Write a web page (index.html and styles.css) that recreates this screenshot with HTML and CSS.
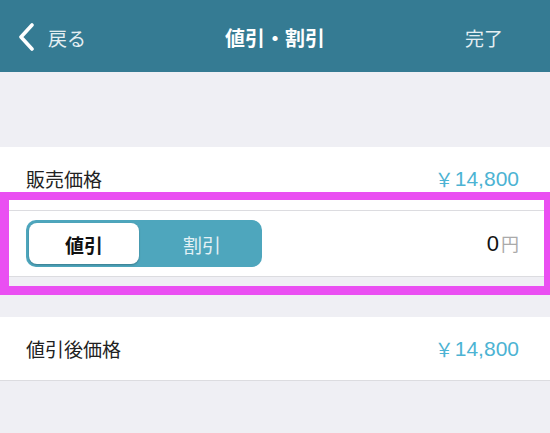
FILE: index.html
```html
<!DOCTYPE html>
<html lang="ja">
<head>
<meta charset="utf-8">
<link rel="stylesheet" href="styles.css">
</head>
<body>
<div class="screen">
  <header class="navbar">
    <div class="nav-left">
      <svg class="chev" width="17" height="28" viewBox="0 0 17 28"><path d="M14 2 L3 14 L14 26" fill="none" stroke="#ffffff" stroke-width="3.6" stroke-linecap="round" stroke-linejoin="round"/></svg>
      <span class="back">戻る</span>
    </div>
    <div class="nav-title">値引・割引</div>
    <div class="nav-right">完了</div>
  </header>

  <div class="gap-top"></div>

  <section class="group">
    <div class="row">
      <span class="label">販売価格</span>
      <span class="price"><span class="yen">￥</span>14,800</span>
    </div>
    <div class="row row-seg">
      <div class="seg">
        <div class="seg-item active">値引</div>
        <div class="seg-item">割引</div>
      </div>
      <span class="amount"><span class="num">0</span><span class="unit">円</span></span>
    </div>
  </section>

  <div class="gap-mid"></div>

  <section class="group">
    <div class="row">
      <span class="label">値引後価格</span>
      <span class="price"><span class="yen">￥</span>14,800</span>
    </div>
  </section>

  <div class="highlight"></div>
</div>
</body>
</html>
```

FILE: styles.css
```css
* { box-sizing: border-box; }
html, body { margin: 0; padding: 0; }
body {
  width: 550px;
  height: 433px;
  overflow: hidden;
  background: #efeff4;
  font-family: "Noto Sans CJK JP", "Liberation Sans", sans-serif;
}
.screen { position: relative; width: 550px; height: 433px; }

.navbar {
  height: 72px;
  background: #357b93;
  display: flex;
  align-items: center;
  justify-content: space-between;
  padding: 3px 47px 0 18px;
  color: #fff;
  position: relative;
}
.nav-left { display: flex; align-items: center; gap: 13px; }
.chev { display: block; margin-top: -2px; }
.back { font-size: 19px; color: #e4eef2; }
.nav-title {
  position: absolute;
  left: 0; right: 0;
  top: 0; bottom: 0;
  padding-top: 3px;
  display: flex;
  align-items: center;
  justify-content: center;
  font-size: 20px;
  font-weight: 700;
  pointer-events: none;
}
.nav-right { font-size: 19px; color: #e4eef2; }

.gap-top { height: 75px; }
.gap-mid { height: 40px; }

.group { background: #fff; border-bottom: 1px solid #dcdce0; }
.row {
  height: 63px;
  display: flex;
  align-items: center;
  justify-content: space-between;
  padding: 0 31px 0 26px;
}
.row + .row { border-top: 1px solid #dcdce0; height: 66px; }
.label { font-size: 19px; color: #222; }
.price {
  font-family: "Liberation Sans", sans-serif;
  font-size: 21px;
  color: #4cb3d3;
  display: flex;
  align-items: center;
}
.yen { font-family: "Noto Sans CJK JP", sans-serif; font-size: 19px; margin-right: 1px; }

.seg {
  width: 236px;
  height: 47px;
  background: #4ea6bd;
  border-radius: 10px;
  padding: 3px;
  display: flex;
}
.seg-item {
  flex: 1;
  display: flex;
  align-items: center;
  justify-content: center;
  font-size: 19px;
  color: #e3f1f5;
  border-radius: 8px;
  padding-top: 1px;
}
.seg-item:not(.active) { padding-left: 6px; }
.seg-item.active {
  flex: 0 0 110px;
  background: #fff;
  color: #111;
  font-weight: 700;
  box-shadow: 0 1px 2px rgba(0,0,0,0.25);
}
.amount { display: flex; align-items: baseline; }
.num { font-family: "Liberation Sans", sans-serif; font-size: 22px; color: #111; margin-right: 2px; }
.unit { font-size: 18px; color: #aaa; }

.highlight {
  position: absolute;
  left: 0;
  top: 192px;
  width: 550px;
  height: 103px;
  border-style: solid;
  border-color: #ea4ff2;
  border-width: 8px 6px 9px 9px;
  pointer-events: none;
}
```
